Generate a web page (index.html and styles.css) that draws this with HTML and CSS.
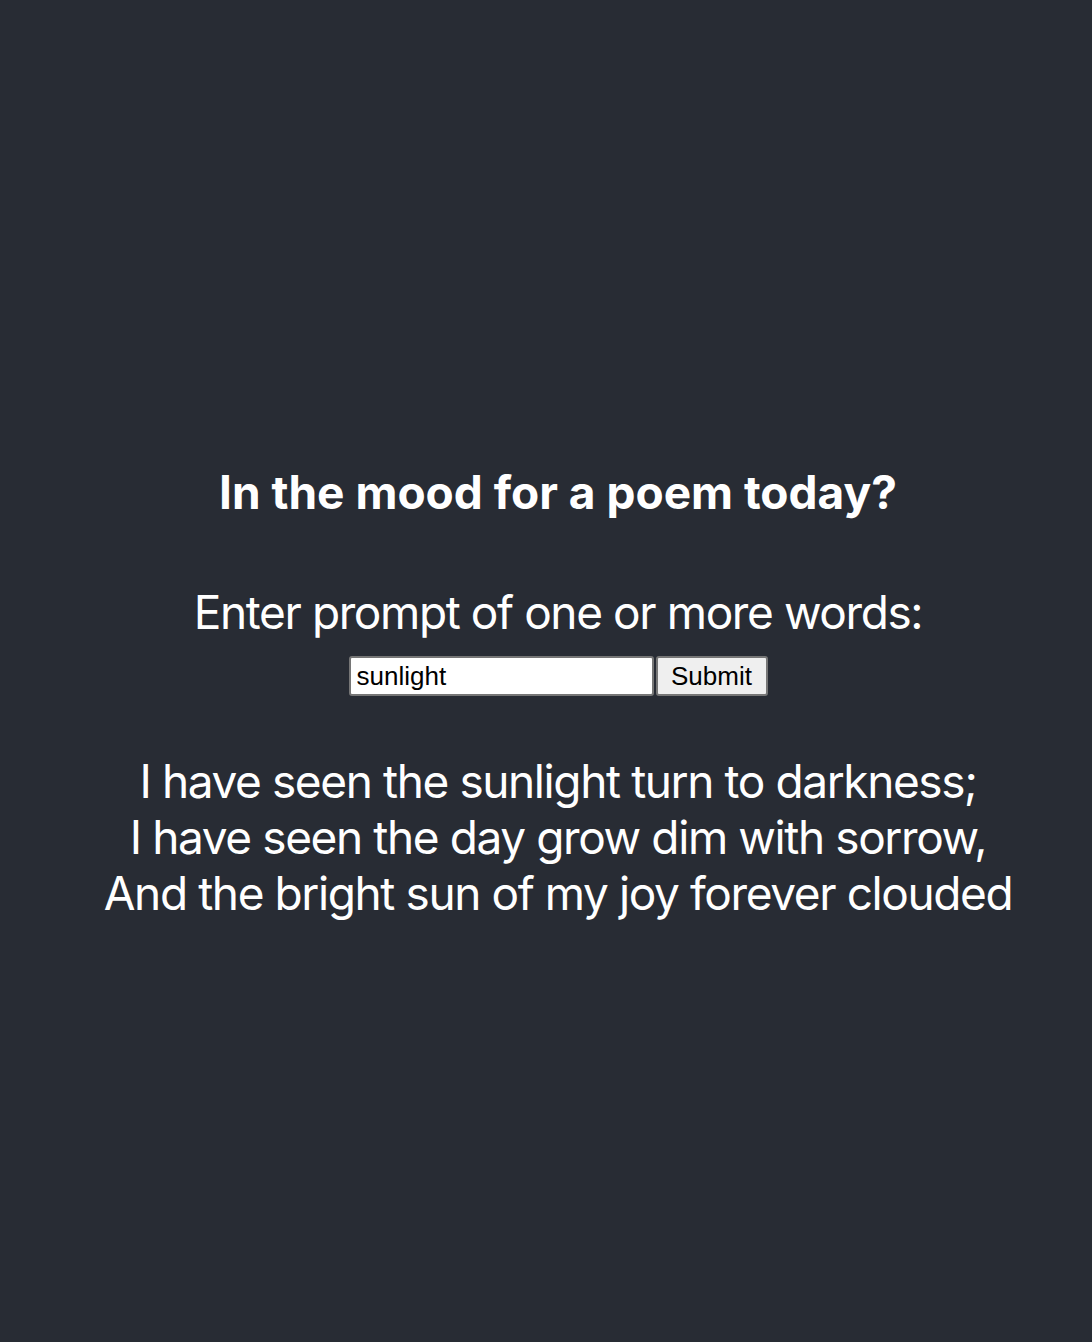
FILE: index.html
```html
<!DOCTYPE html>
<html lang="en">
<head>
<meta charset="utf-8">
<title>Poem</title>
<link rel="stylesheet" href="styles.css">
</head>
<body>
<div class="app">
  <h2 class="title">In the mood for a poem today?</h2>
  <p class="label">Enter prompt of one or more words:</p>
  <form class="prompt-form">
    <input class="prompt-input" type="text" value="sunlight">
    <button class="prompt-submit" type="button">Submit</button>
  </form>
  <div class="poem">
    <div class="poem-line">I have seen the sunlight turn to darkness;</div>
    <div class="poem-line">I have seen the day grow dim with sorrow,</div>
    <div class="poem-line">And the bright sun of my joy forever clouded</div>
  </div>
</div>
</body>
</html>
```
FILE: styles.css
```css
html, body {
  margin: 0;
  padding: 0;
  background: #282c34;
}
.app {
  min-height: 100vh;
  box-sizing: border-box;
  padding: 43px 0 0 24px;
  display: flex;
  flex-direction: column;
  align-items: center;
  justify-content: center;
  color: #ffffff;
  font-family: Inter, "Liberation Sans", sans-serif;
  font-size: 46px;
  text-align: center;
}
.title {
  margin: 0 0 64px 0;
  font-size: 46px;
  font-weight: 700;
  line-height: normal;
}
.label {
  margin: 0 0 16px 0;
  line-height: normal;
  letter-spacing: -1.4px;
}
.prompt-form {
  display: flex;
  align-items: stretch;
  gap: 2px;
  margin: 0 0 57px 0;
}
.prompt-input {
  width: 305px;
  height: 40px;
  box-sizing: border-box;
  border: 2px solid #767676;
  border-radius: 3px;
  padding: 1px 6px;
  font-family: "Liberation Sans", Arial, sans-serif;
  font-size: 26px;
  color: #000;
  background: #fff;
  margin: 0;
}
.prompt-submit {
  width: 112px;
  height: 40px;
  box-sizing: border-box;
  border: 2px solid #767676;
  border-radius: 3px;
  background: #efefef;
  font-family: "Liberation Sans", Arial, sans-serif;
  font-size: 26px;
  color: #000;
  padding: 1px 6px;
  margin: 0;
}
.poem-line {
  line-height: normal;
  letter-spacing: -1.4px;
}
```
